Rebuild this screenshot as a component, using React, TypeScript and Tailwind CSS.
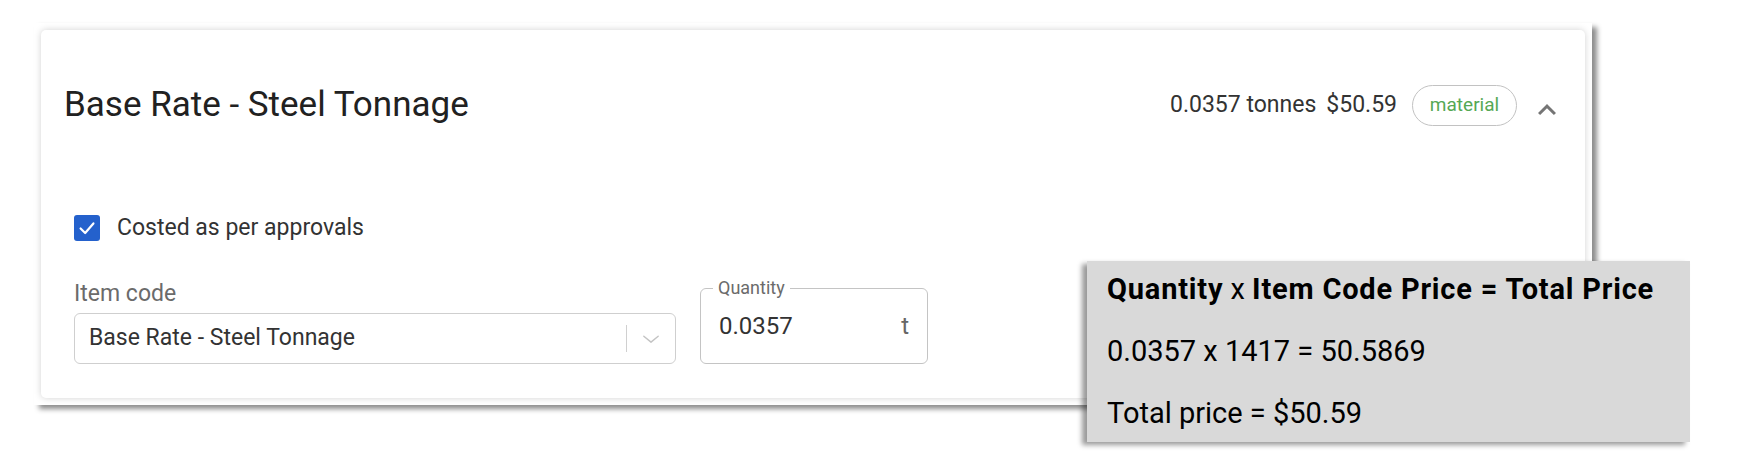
import React from "react";

function ChevronUp() {
  return (
    <svg viewBox="0 0 24 24" className="h-[36px] w-[36px] text-[#757575]" fill="currentColor">
      <path d="M12 8l-6 6 1.41 1.41L12 10.83l4.59 4.58L18 14z" />
    </svg>
  );
}

function Checkbox() {
  return (
    <span className="flex h-[26px] w-[26px] items-center justify-center rounded-[3px] bg-[#2461cc]">
      <svg viewBox="0 0 24 24" className="h-[22px] w-[22px]" fill="none" stroke="white" strokeWidth={2.4}>
        <polyline points="5,12.5 10,17.5 19,7" strokeLinecap="round" strokeLinejoin="round" />
      </svg>
    </span>
  );
}

export default function App() {
  return (
    <div className="relative h-[472px] w-[1764px] overflow-hidden bg-white pl-[34px] pt-[23px] font-[Roboto,sans-serif]">
      {/* Screenshot frame with its drop shadow */}
      <div className="w-[1558px] bg-white p-[7px] shadow-[5px_4px_5px_rgba(0,0,0,0.45)]">
        {/* Card */}
        <div className="flex h-[368px] w-[1544px] flex-col rounded-[5px] bg-white shadow-[0_0_7px_rgba(0,0,0,0.18)]">
          {/* Header */}
          <div className="flex h-[150px] items-center justify-between pl-[23px] pr-[20px]">
            <h2 className="text-[35px] font-normal text-[#212121]">Base Rate - Steel Tonnage</h2>
            <div className="flex items-center">
              <span className="text-[23px] text-[#333]">0.0357 tonnes</span>
              <span className="ml-[10px] text-[23px] text-[#333]">$50.59</span>
              <span className="ml-[15px] flex h-[41px] w-[105px] items-center justify-center rounded-full border border-[#c2c2c2] text-[19px] text-[#55a854]">
                material
              </span>
              <span className="ml-[12px] mt-[10px]">
                <ChevronUp />
              </span>
            </div>
          </div>

          {/* Body */}
          <div className="flex flex-col px-[33px]">
            <div className="mt-[30px] flex h-[36px] items-center gap-[17px]">
              <Checkbox />
              <span className="text-[23px] text-[#333]">Costed as per approvals</span>
            </div>

            <div className="mt-[32px] flex items-end gap-[24px]">
              <div className="flex w-[602px] flex-col">
                <label className="mb-[5px] h-[28px] text-[23px] leading-[28px] text-[#6b6b6b]">Item code</label>
                <div className="flex h-[51px] items-center rounded-[6px] border border-[#cfcfcf] pl-[14px]">
                  <span className="flex-1 text-[23px] text-[#333]">Base Rate - Steel Tonnage</span>
                  <span className="h-[27px] w-px bg-[#d0d0d0]" />
                  <span className="flex w-[48px] items-center justify-center">
                    <svg viewBox="0 0 20 10" className="h-[10px] w-[18px]" fill="none" stroke="#c4c4c4" strokeWidth={1.6}>
                      <polyline points="2,2 10,8.5 18,2" strokeLinecap="round" strokeLinejoin="round" />
                    </svg>
                  </span>
                </div>
              </div>

              <fieldset className="w-[228px] rounded-[6px] border border-[#c4c4c4]">
                <legend className="ml-[12px] px-[5px] text-[18px] leading-[20px] text-[#6b6b6b]">Quantity</legend>
                <div className="flex h-[65px] items-center justify-between pb-[10px] pl-[18px] pr-[18px]">
                  <span className="text-[24px] text-[#333]">0.0357</span>
                  <span className="text-[24px] text-[#666]">t</span>
                </div>
              </fieldset>
            </div>
          </div>
        </div>
      </div>

      {/* Formula note laid over the card */}
      <div className="absolute left-[1087px] top-[261px] flex h-[181px] w-[603px] flex-col gap-[26px] bg-[#d9d9d9] pb-[10px] pl-[20px] pt-[10px] text-[29px] leading-[36px] text-black shadow-[-5px_3px_5px_rgba(0,0,0,0.4)]">
        <p>
          <span className="font-bold tracking-[0.8px]">Quantity</span> x{" "}
          <span className="font-bold tracking-[0.8px]">Item Code Price = Total Price</span>
        </p>
        <p>0.0357 x 1417 = 50.5869</p>
        <p>Total price = $50.59</p>
      </div>
    </div>
  );
}
